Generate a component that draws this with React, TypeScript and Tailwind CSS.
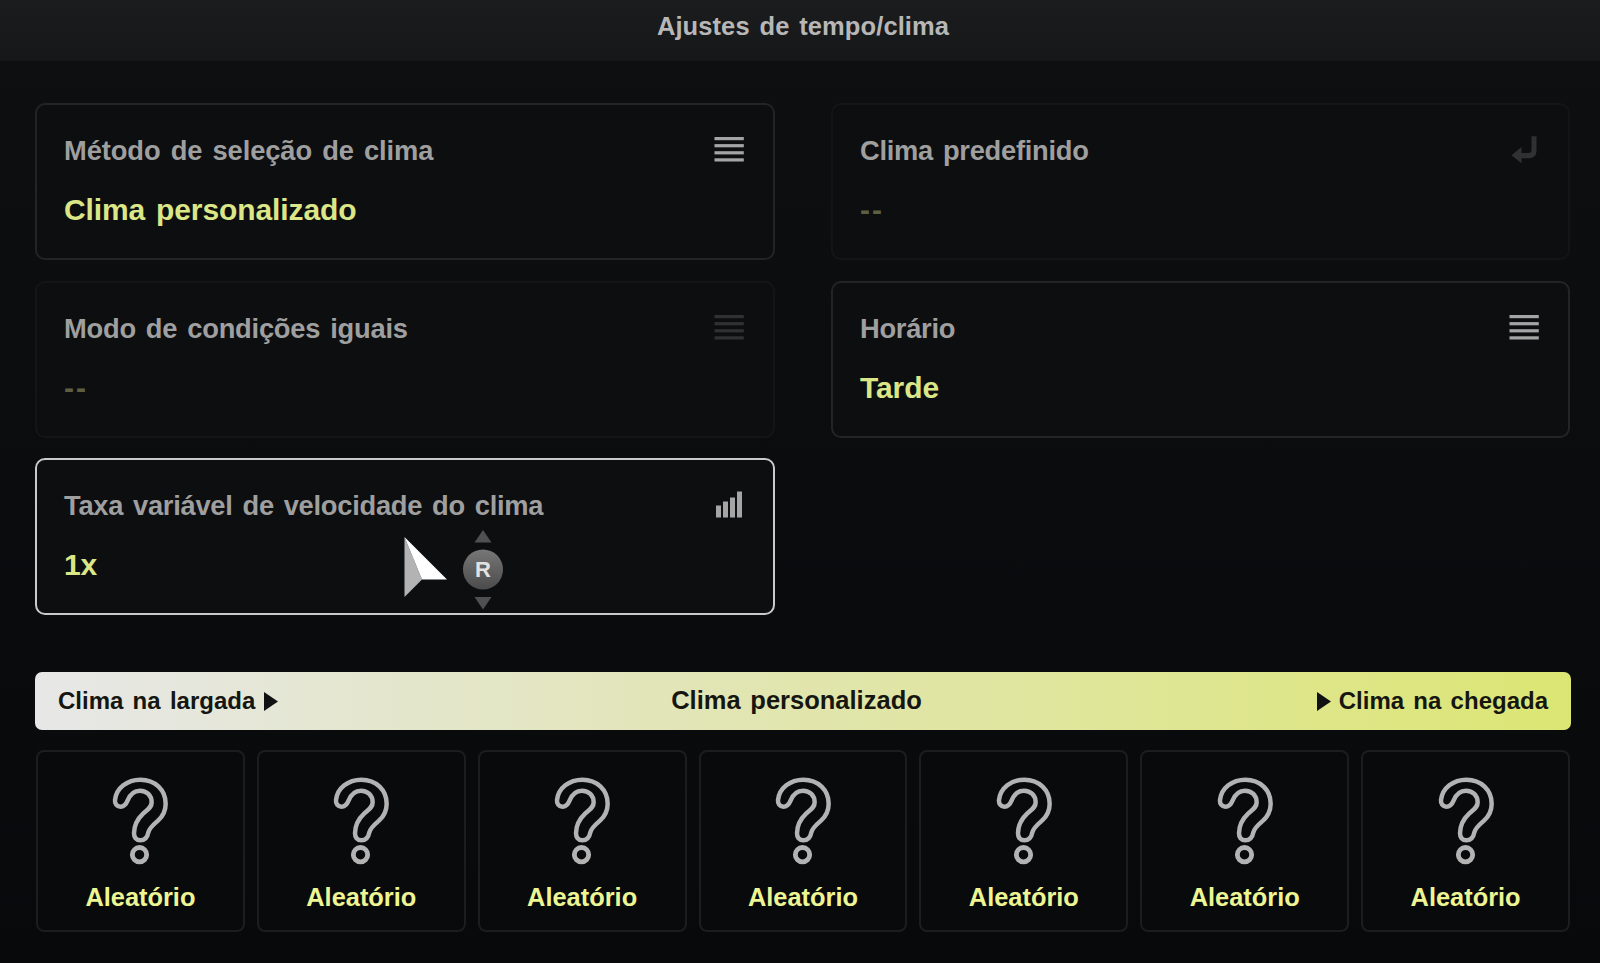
import type { ReactNode } from "react";

function ListIcon() {
  return (
    <svg width="30" height="26" viewBox="0 0 30 26" fill="currentColor">
      <rect x="0.500" y="0" width="29.300" height="3.2" />
      <rect x="0.500" y="7.1" width="29.300" height="3.2" />
      <rect x="0.500" y="14.2" width="29.300" height="3.2" />
      <rect x="0.500" y="21.3" width="29.300" height="3.2" />
    </svg>
  );
}

function EnterIcon() {
  return (
    <svg
      className="overflow-visible"
      width="30"
      height="26"
      viewBox="0 0 30 26"
      fill="currentColor"
    >
      <path d="M22.500 -0.800h5v14.500q0 7.500-7.500 7.500H12.500v5L2.500 18.200 12.500 10v6h7q3 0 3-3z" />
    </svg>
  );
}

function BarsIcon() {
  return (
    <svg
      className="overflow-visible"
      width="30"
      height="26"
      viewBox="0 0 30 26"
      fill="currentColor"
    >
      <rect x="2" y="13.500" width="5" height="12" />
      <rect x="9" y="9.500" width="5" height="16" />
      <rect x="16" y="5.500" width="5" height="20" />
      <rect x="23" y="-0.500" width="5" height="26" />
    </svg>
  );
}

function QuestionIcon() {
  return (
    <svg
      width="80"
      height="120"
      viewBox="0 0 240 360"
      fill="none"
      stroke="#b3b3b3"
      strokeWidth="13.500"
    >
      <path d="M61 140C50 140 44 131 45 120C49 84 82 59 121 59C166 59 197 90 197 131C197 156 188 169 174 182C160 194 149 202 145 217C142 233 135 241 121 241C108 241 102 232 102 220C102 195 114 175 130 160C145 147 155 142 155 127C155 106 140 92 120 92C101 92 90 104 83 121C78 133 71 140 61 140Z" />
      <circle cx="118.500" cy="284" r="21.500" strokeWidth="14.500" />
    </svg>
  );
}

function Triangle() {
  return (
    <svg width="14" height="19" viewBox="0 0 14 19" fill="#101112">
      <path d="M0 0L14 9.500L0 19Z" />
    </svg>
  );
}

type CardProps = {
  label: string;
  value: string;
  icon: ReactNode;
  tracking?: string;
  disabled?: boolean;
  selected?: boolean;
  children?: ReactNode;
};

function Card({
  label,
  value,
  icon,
  tracking = "tracking-[-0.27px]",
  disabled,
  selected,
  children,
}: CardProps) {
  const border = selected
    ? "border-[#c9cbca]"
    : disabled
      ? "border-[#141517]"
      : "border-[#232425]";
  return (
    <div
      className={`relative h-[157px] rounded-[10px] border-2 bg-[#0d0e10] pl-[27px] pr-[29px] pt-[30px] ${border}`}
    >
      <div className="flex justify-between">
        <span className={`text-[27.3px] leading-8 text-[#9f9f9f] ${tracking}`}>{label}</span>
        <span className={disabled ? "pt-0.5 text-[#303132]" : "pt-0.5 text-[#a5a5a5]"}>
          {icon}
        </span>
      </div>
      <div
        className={`mt-[25px] text-[30px] leading-9 ${disabled ? "tracking-[2px] text-[#5d5f43]" : "tracking-[-0.1px] text-[#dbe687]"}`}
      >
        {value}
      </div>
      {children}
    </div>
  );
}

function Pointer() {
  return (
    <svg
      className="absolute left-[366px] top-[70px]"
      width="106"
      height="84"
      viewBox="0 0 106 84"
    >
      <defs>
        <linearGradient id="stick" x1="0" y1="0" x2="0" y2="1">
          <stop offset="0" stopColor="#777777" />
          <stop offset="1" stopColor="#4b4b4b" />
        </linearGradient>
      </defs>
      <path d="M1.500 7L19 49.500L1.500 67Z" fill="#b3b3b3" />
      <path d="M1.500 7L44 49.500H19Z" fill="#ffffff" />
      <path d="M80 0L88.500 12.500H71.500Z" fill="#505050" />
      <circle cx="80" cy="39.500" r="20" fill="url(#stick)" />
      <text x="80" y="47" textAnchor="middle" fontSize="22" fill="#e2e2e2">
        R
      </text>
      <path d="M71.500 67H88.500L80 79.500Z" fill="#505050" />
    </svg>
  );
}

export default function App() {
  return (
    <div className="flex h-[963px] w-[1600px] flex-col overflow-hidden bg-linear-to-b from-[#0e0f11] to-[#08090b] font-['Liberation_Sans',Arial,sans-serif] font-bold whitespace-nowrap [word-spacing:2.6px]">
      {/* Header */}
      <header className="flex h-[61px] shrink-0 justify-center bg-linear-to-b from-[#1b1c1e] to-[#161719] pt-[10px]">
        <h1 className="mr-[-6px] text-[25.5px] leading-8 tracking-[0.1px] text-[#b7b7b7]">
          Ajustes de tempo/clima
        </h1>
      </header>

      <main className="pl-[35px] pr-[30px] pt-[42px]">
        {/* Settings */}
        <div className="grid grid-cols-[740px_739px] gap-x-[56px] gap-y-[20.5px]">
          <Card
            label="Método de seleção de clima"
            value="Clima personalizado"
            icon={<ListIcon />}
            tracking="tracking-[-0.08px]"
          />
          <Card label="Clima predefinido" value="--" icon={<EnterIcon />} disabled />
          <Card
            label="Modo de condições iguais"
            value="--"
            icon={<ListIcon />}
            tracking="tracking-[-0.22px]"
            disabled
          />
          <Card label="Horário" value="Tarde" icon={<ListIcon />} />
          <Card
            label="Taxa variável de velocidade do clima"
            value="1x"
            icon={<BarsIcon />}
            selected
          >
            <Pointer />
          </Card>
        </div>

        {/* Timeline */}
        <div className="-mr-px mt-[57px] grid h-[58px] grid-cols-[1fr_auto_1fr] items-center rounded-[7px] bg-linear-to-r from-[#e7e7e7] via-[#e1e5ad] to-[#dce673] px-[23px] text-2xl text-[#151610]">
          <div className="flex items-center gap-[9px]">
            <span>Clima na largada</span>
            <Triangle />
          </div>
          <span className="mr-[13px] text-[25.5px]">Clima personalizado</span>
          <div className="flex items-center justify-end gap-2">
            <Triangle />
            <span>Clima na chegada</span>
          </div>
        </div>

        {/* Weather slots */}
        <div className="mt-5 grid grid-cols-7 gap-3 pl-px">
          {Array.from({ length: 7 }, (_, index) => (
            <div
              key={index}
              className="flex h-[182px] flex-col items-center rounded-lg border-2 border-[#1c1d1f] bg-[#090a0c] pt-2"
            >
              <QuestionIcon />
              <span className="mt-px text-[25.4px] leading-8 text-[#edf693]">Aleatório</span>
            </div>
          ))}
        </div>
      </main>
    </div>
  );
}
